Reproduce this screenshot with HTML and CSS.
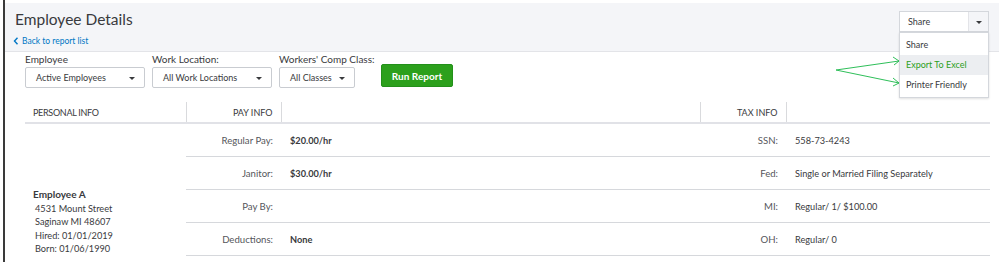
FILE: index.html
```html
<!DOCTYPE html>
<html lang="en">
<head>
    <meta charset="UTF-8">
    <title>Employee Details</title>
    <link rel="stylesheet" href="styles.css">
</head>
<body>
    <div class="page">
        <div class="header">
            <div class="titles">
                <h1>Employee Details</h1>
                <a class="back" href="#">
                    <svg width="6" height="8" viewBox="0 0 6 8"><path d="M4.5 0.8 L1.5 4 L4.5 7.2" fill="none" stroke="#0077c5" stroke-width="1.4"/></svg>
                    Back to report list
                </a>
            </div>
            <div class="share">
                <div class="share-btn">
                    <span class="share-label">Share</span>
                    <span class="share-caret"></span>
                </div>
                <ul class="share-menu">
                    <li>Share</li>
                    <li class="active">Export To Excel</li>
                    <li>Printer Friendly</li>
                </ul>
            </div>
        </div>

        <svg class="arrows" width="70" height="40" viewBox="0 0 70 40">
            <g fill="none" stroke="#2fbf5a" stroke-width="1">
                <path d="M1 18 L64 9"/>
                <path d="M58 5 L64 9 L59 13"/>
                <path d="M1 18 L64 31"/>
                <path d="M58 26 L64 31 L58 34"/>
            </g>
        </svg>

        <form class="filters" onsubmit="event.preventDefault();">
            <div class="field w-emp">
                <label>Employee</label>
                <div class="select">Active Employees<span class="caret"></span></div>
            </div>
            <div class="field w-loc">
                <label>Work Location:</label>
                <div class="select">All Work Locations<span class="caret"></span></div>
            </div>
            <div class="field w-cls">
                <label>Workers' Comp Class:</label>
                <div class="select">All Classes<span class="caret"></span></div>
            </div>
            <button type="submit" class="run">Run Report</button>
        </form>

        <table class="report">
            <colgroup>
                <col class="c-personal">
                <col class="c-paylabel">
                <col class="c-payval">
                <col class="c-taxlabel">
                <col class="c-taxval">
            </colgroup>
            <thead>
                <tr>
                    <th class="left">PERSONAL INFO</th>
                    <th>PAY INFO</th>
                    <th></th>
                    <th>TAX INFO</th>
                    <th class="last"></th>
                </tr>
            </thead>
            <tbody>
                <tr>
                    <td class="personal" rowspan="4">
                        <div class="emp-name">Employee A</div>
                        <div class="emp-line">4531 Mount Street</div>
                        <div class="emp-line">Saginaw MI 48607</div>
                        <div class="emp-line">Hired: 01/01/2019</div>
                        <div class="emp-line">Born: 01/06/1990</div>
                    </td>
                    <td class="lbl">Regular Pay:</td>
                    <td class="val strong">$20.00/hr</td>
                    <td class="lbl">SSN:</td>
                    <td class="val">558-73-4243</td>
                </tr>
                <tr>
                    <td class="lbl">Janitor:</td>
                    <td class="val strong">$30.00/hr</td>
                    <td class="lbl">Fed:</td>
                    <td class="val">Single or Married Filing Separately</td>
                </tr>
                <tr>
                    <td class="lbl">Pay By:</td>
                    <td class="val"></td>
                    <td class="lbl">MI:</td>
                    <td class="val">Regular/ 1/ $100.00</td>
                </tr>
                <tr>
                    <td class="lbl">Deductions:</td>
                    <td class="val strong">None</td>
                    <td class="lbl">OH:</td>
                    <td class="val">Regular/ 0</td>
                </tr>
            </tbody>
        </table>
    </div>
</body>
</html>
```

FILE: styles.css
```css
body {
    margin: 0;
    font-family: Lato, "Open Sans", sans-serif;
    color: #393a3d;
    background: #fff;
}
.page {
    position: relative;
    margin-left: 3px;
    padding-top: 3px;
    border-left: 2px solid #3a3a3a;
    height: 259px;
    overflow: hidden;
}
.header {
    display: flex;
    justify-content: space-between;
    align-items: flex-start;
    height: 48px;
    padding: 0 10px;
    background: #f4f5f8;
    border-bottom: 1px solid #e3e4e8;
}
.titles h1 {
    margin: 6px 0 0;
    font-size: 15.5px;
    font-weight: 400;
    line-height: 20px;
    color: #393a3d;
}
.back {
    display: flex;
    align-items: center;
    gap: 3px;
    margin: 7px 0 0 -2px;
    font-size: 8.5px;
    color: #0077c5;
    text-decoration: none;
}
.share {
    position: relative;
    margin-top: 8px;
    z-index: 2;
}
.share-btn {
    display: flex;
    width: 88px;
    height: 19px;
    border: 1px solid #d4d7dc;
    background: #fff;
    font-size: 9px;
}
.share-label {
    flex: 1;
    padding-left: 8px;
    line-height: 19px;
}
.share-caret {
    position: relative;
    width: 19px;
    background: #f4f5f8;
    border-left: 1px solid #e3e4e8;
}
.share-caret::after,
.caret::after {
    content: "";
    position: absolute;
    top: 50%;
    left: 50%;
    margin: -1px 0 0 -3px;
    border-left: 3px solid transparent;
    border-right: 3px solid transparent;
    border-top: 3px solid #393a3d;
}
.share-menu {
    position: absolute;
    top: 21px;
    left: 0;
    width: 88px;
    margin: 0;
    padding: 2px 0;
    list-style: none;
    background: #fff;
    border: 1px solid #d4d7dc;
    box-shadow: 0 1px 2px rgba(0, 0, 0, 0.12);
    font-size: 9px;
}
.share-menu li {
    height: 20px;
    line-height: 20px;
    padding-left: 6px;
}
.share-menu li.active {
    background: #eceef1;
    color: #2ca01c;
}
.arrows {
    position: absolute;
    left: 830px;
    top: 52px;
}
.filters {
    display: flex;
    align-items: flex-end;
    gap: 7px;
    padding: 1px 0 0 20px;
}
.field {
    flex: none;
}
.field label {
    display: block;
    white-space: nowrap;
    font-size: 10px;
    line-height: 12px;
    margin-bottom: 2px;
}
.select {
    position: relative;
    height: 19px;
    line-height: 19px;
    padding-left: 10px;
    border: 1px solid #c9ccd1;
    border-radius: 2px;
    background: #fff;
    font-size: 9px;
}
.caret {
    position: absolute;
    right: 9px;
    top: 0;
    width: 6px;
    height: 100%;
}
.w-emp { width: 120px; }
.w-loc { width: 120px; }
.w-cls { width: 76px; }
.run {
    flex: none;
    margin: 0 0 1px 19px;
    width: 72px;
    height: 23px;
    padding: 0;
    border: 1px solid #23901a;
    border-radius: 2px;
    background: #2ca01c;
    color: #fff;
    font-family: inherit;
    font-size: 10px;
    font-weight: 700;
}
.report {
    margin: 14px 0 0 20px;
    width: 965px;
    border-collapse: collapse;
    table-layout: fixed;
    font-size: 9.2px;
}
.c-personal { width: 161px; }
.c-paylabel { width: 95px; }
.c-payval { width: 419px; }
.c-taxlabel { width: 86px; }
.c-taxval { width: 204px; }
.report th {
    height: 20px;
    padding: 0 8px;
    font-size: 9px;
    font-weight: 400;
    text-align: right;
    color: #393a3d;
    border-right: 1px solid #d9dadd;
    border-bottom: 2px solid #e1e2e7;
}
.report th.left {
    text-align: left;
    letter-spacing: -0.3px;
}
.report th.last { border-right: none; }
.report td {
    height: 32px;
    padding: 0;
    border-bottom: 1px solid #d6d8dc;
}
.report td.lbl {
    text-align: right;
    padding-right: 8px;
    font-size: 9.6px;
    color: #55565b;
}
.report td.val {
    padding-left: 9px;
}
.report td.strong { font-weight: 700; }
.report td.personal {
    vertical-align: bottom;
    padding: 0 0 0 8px;
    border-bottom: none;
}
.emp-name {
    font-size: 10px;
    line-height: 15px;
    font-weight: 700;
}
.emp-line {
    padding-left: 2px;
    font-size: 9.2px;
    line-height: 13.5px;
}
```
